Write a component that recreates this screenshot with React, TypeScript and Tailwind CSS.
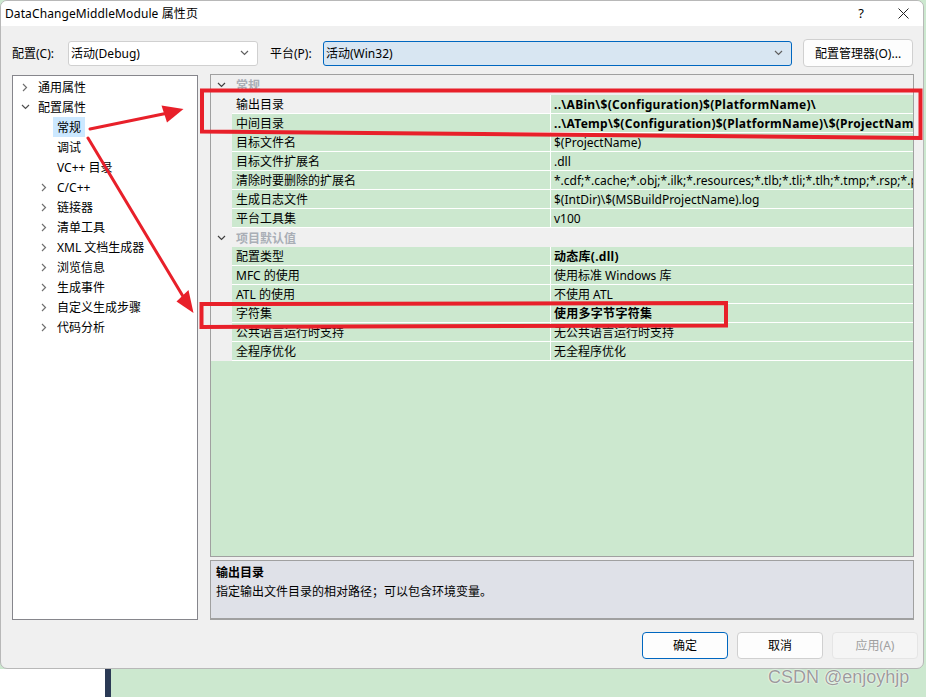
import React from 'react';

type Row =
  | { kind: 'header'; label: string }
  | { kind: 'row'; name: string; value: string; bold?: boolean; sel?: boolean };

const rows: Row[] = [
  { kind: 'header', label: '常规' },
  { kind: 'row', name: '输出目录', value: '..\\ABin\\$(Configuration)$(PlatformName)\\', bold: true, sel: true },
  { kind: 'row', name: '中间目录', value: '..\\ATemp\\$(Configuration)$(PlatformName)\\$(ProjectName)\\', bold: true },
  { kind: 'row', name: '目标文件名', value: '$(ProjectName)' },
  { kind: 'row', name: '目标文件扩展名', value: '.dll' },
  { kind: 'row', name: '清除时要删除的扩展名', value: '*.cdf;*.cache;*.obj;*.ilk;*.resources;*.tlb;*.tli;*.tlh;*.tmp;*.rsp;*.pgc;*.pgd;*.meta;$(TargetPath)' },
  { kind: 'row', name: '生成日志文件', value: '$(IntDir)\\$(MSBuildProjectName).log' },
  { kind: 'row', name: '平台工具集', value: 'v100' },
  { kind: 'header', label: '项目默认值' },
  { kind: 'row', name: '配置类型', value: '动态库(.dll)', bold: true },
  { kind: 'row', name: 'MFC 的使用', value: '使用标准 Windows 库' },
  { kind: 'row', name: 'ATL 的使用', value: '不使用 ATL' },
  { kind: 'row', name: '字符集', value: '使用多字节字符集', bold: true },
  { kind: 'row', name: '公共语言运行时支持', value: '无公共语言运行时支持' },
  { kind: 'row', name: '全程序优化', value: '无全程序优化' },
];

type TreeItem = { label: string; level: 0 | 1; chev?: 'right' | 'down'; sel?: boolean };
const tree: TreeItem[] = [
  { label: '通用属性', level: 0, chev: 'right' },
  { label: '配置属性', level: 0, chev: 'down' },
  { label: '常规', level: 1, sel: true },
  { label: '调试', level: 1 },
  { label: 'VC++ 目录', level: 1 },
  { label: 'C/C++', level: 1, chev: 'right' },
  { label: '链接器', level: 1, chev: 'right' },
  { label: '清单工具', level: 1, chev: 'right' },
  { label: 'XML 文档生成器', level: 1, chev: 'right' },
  { label: '浏览信息', level: 1, chev: 'right' },
  { label: '生成事件', level: 1, chev: 'right' },
  { label: '自定义生成步骤', level: 1, chev: 'right' },
  { label: '代码分析', level: 1, chev: 'right' },
];

function ChevRight() {
  return (
    <svg width="6" height="9" viewBox="0 0 6 9">
      <polyline points="1,1 4.5,4.5 1,8" fill="none" stroke="#707070" strokeWidth="1.2" />
    </svg>
  );
}
function ChevDown({ color = '#404040' }: { color?: string }) {
  return (
    <svg width="9" height="6" viewBox="0 0 9 6">
      <polyline points="1,1 4.5,4.5 8,1" fill="none" stroke={color} strokeWidth="1.2" />
    </svg>
  );
}

export default function App() {
  return (
    <div className="relative w-[926px] h-[697px] overflow-hidden bg-[#cce8cf] font-['Noto_Sans','Noto_Sans_CJK_SC',sans-serif] text-[12px] text-black">
      <div className="flex h-[669px]">
        {/* Dialog */}
        <div className="w-[924px] h-[669px] flex flex-col bg-[#f0f0f0] border border-[#b8b8b8] rounded-[7px] overflow-hidden">
          {/* Title bar */}
          <div className="h-[25px] bg-white flex items-center pl-[4px]">
            <span className="flex-1 text-[12px] leading-none tracking-[0.1px]">DataChangeMiddleModule 属性页</span>
            <span className="w-[20px] text-center text-[13px] leading-none">?</span>
            <span className="w-[26px]" />
            <span className="w-[12px] flex items-center justify-center">
              <svg width="11" height="11" viewBox="0 0 11 11">
                <line x1="0.5" y1="0.5" x2="10.5" y2="10.5" stroke="#222" strokeWidth="1" />
                <line x1="10.5" y1="0.5" x2="0.5" y2="10.5" stroke="#222" strokeWidth="1" />
              </svg>
            </span>
            <span className="w-[14px]" />
          </div>

          {/* Body */}
          <div className="flex-1 flex flex-col pl-[11px] pt-[13px]">
            {/* Top row */}
            <div className="flex items-center h-[28px]">
              <span className="w-[56px] pt-[1px]">配置(C):</span>
              <div className="w-[190px] h-[25px] bg-white border border-[#d0d0d0] rounded-[3px] flex items-center pl-[2px] pr-[8px]">
                <span className="flex-1 pt-[1px]">活动(Debug)</span>
                <ChevDown color="#606060" />
              </div>
              <span className="w-[65px] pl-[12px] pt-[1px]">平台(P):</span>
              <div className="w-[469px] h-[25px] bg-[#d8e6f2] border border-[#0067c0] rounded-[3px] flex items-center pl-[2px] pr-[8px]">
                <span className="flex-1 pt-[1px]">活动(Win32)</span>
                <ChevDown color="#606060" />
              </div>
              <div className="ml-[11px] w-[110px] h-[28px] bg-[#fdfdfd] border border-[#d0d0d0] rounded-[4px] flex items-center justify-center pt-[1px]">
                配置管理器(O)...
              </div>
            </div>

            {/* Panels */}
            <div className="flex mt-[7px] h-[546px]">
              {/* Tree */}
              <div className="w-[186px] mt-[1px] h-[545px] bg-white border border-[#86868c] pt-[1px]">
                {tree.map((t, i) => (
                  <div
                    key={i}
                    className={`h-[20px] flex items-center ${t.level === 0 ? 'pl-[6px]' : 'pl-[25px]'}`}
                  >
                    <span className="w-[12px] mr-[7px] flex items-center justify-center">
                      {t.chev === 'right' && <ChevRight />}
                      {t.chev === 'down' && <ChevDown color="#505050" />}
                    </span>
                    <span
                      className={`h-[20px] flex items-center whitespace-nowrap pt-[1px] ${
                        t.sel ? 'bg-[#cce8ff] -ml-[4px] px-[4px]' : ''
                      }`}
                    >
                      {t.label}
                    </span>
                  </div>
                ))}
              </div>

              {/* Right side */}
              <div className="ml-[12px] w-[704px] flex flex-col">
                {/* Grid */}
                <div className="h-[483px] border border-[#a0a0a0] flex flex-col bg-[#cce8cf] overflow-hidden">
                  {rows.map((r, i) =>
                    r.kind === 'header' ? (
                      <div
                        key={i}
                        className={`${i === 0 ? 'h-[20px]' : 'h-[19px]'} flex items-center bg-[#f0f0f0]`}
                      >
                        <span className="w-[21px] flex items-center justify-center">
                          <ChevDown color="#404040" />
                        </span>
                        <span className="pl-[4px] pt-[2px] font-bold text-[#a9aeb6]">{r.label}</span>
                      </div>
                    ) : (
                      <div key={i} className="h-[19px] flex">
                        <div className="w-[21px] bg-[#f0f0f0]" />
                        <div
                          className={`w-[319px] h-[19px] border-b border-r border-white pl-[4px] pt-[2px] flex items-center whitespace-nowrap ${
                            r.sel ? 'bg-[#f0f0f0]' : 'bg-[#cce8cf]'
                          }`}
                        >
                          {r.name}
                        </div>
                        <div
                          className={`flex-1 h-[19px] border-b border-white pl-[3px] pt-[2px] flex items-center whitespace-nowrap overflow-hidden ${
                            r.bold ? 'font-bold tracking-[0.28px]' : ''
                          }`}
                        >
                          {r.value}
                        </div>
                      </div>
                    )
                  )}
                  <div className="flex-1 bg-[#cce8cf]" />
                </div>

                {/* Description */}
                <div className="mt-[3px] h-[60px] bg-[#dfe1e8] border-x border-t border-b-2 border-[#a0a0a0] pl-[5px] pt-[2px]">
                  <div className="h-[19px] flex items-center font-bold">输出目录</div>
                  <div className="h-[19px] flex items-center">指定输出文件目录的相对路径；可以包含环境变量。</div>
                </div>
              </div>
            </div>

            {/* Buttons */}
            <div className="flex justify-end pr-[5px] mt-[12px] gap-[9px]">
              <div className="w-[86px] h-[27px] bg-[#fdfdfd] border border-[#0067c0] rounded-[4px] flex items-center justify-center pt-[1px]">
                确定
              </div>
              <div className="w-[86px] h-[27px] bg-[#fdfdfd] border border-[#d0d0d0] rounded-[4px] flex items-center justify-center pt-[1px]">
                取消
              </div>
              <div className="w-[86px] h-[27px] bg-[#f5f5f5] border border-[#e5e5e5] rounded-[4px] flex items-center justify-center pt-[1px] text-[#a0a0a0]">
                应用(A)
              </div>
            </div>
          </div>
        </div>
        <div className="flex-1" />
      </div>

      {/* Below dialog */}
      <div className="flex h-[28px]">
        <div className="w-[105px] bg-white" />
        <div className="w-[6px] bg-[#2b3a55]" />
        <div className="flex-1 bg-[#cce8cf]" />
      </div>

      {/* Watermark */}
      <div className="absolute left-[768px] top-[666px] font-['Liberation_Sans',sans-serif] text-[18px] leading-[22px] text-[#9c9c9c] [text-shadow:0_0_2px_#ffffff,0_0_1px_#ffffff]">
        CSDN @enjoyhjp
      </div>

      {/* Red annotations */}
      <svg className="absolute left-0 top-0 pointer-events-none" width="926" height="697" viewBox="0 0 926 697">
        <path d="M202,90.5 L920.5,90.5 L920.5,138 L202,131.5 Z" fill="none" stroke="#e8202a" strokeWidth="4" strokeLinejoin="miter" />
        <path d="M201.5,304 L726,303 L726,325.5 L201.5,327 Z" fill="none" stroke="#e8202a" strokeWidth="4" />
        <line x1="90" y1="129" x2="168" y2="113" stroke="#e8202a" strokeWidth="3" strokeLinecap="round" />
        <polygon points="183.5,109 161.5,105.5 167,122.5" fill="#e8202a" />
        <line x1="88" y1="138" x2="184" y2="298" stroke="#e8202a" strokeWidth="3" strokeLinecap="round" />
        <polygon points="193.5,313 176.5,301.5 188.5,290" fill="#e8202a" />
      </svg>
    </div>
  );
}
